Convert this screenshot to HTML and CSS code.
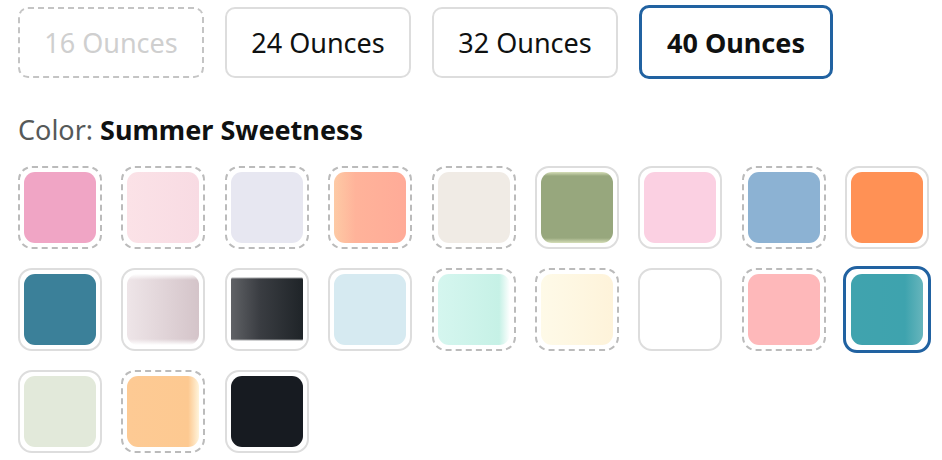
FILE: index.html
```html
<!DOCTYPE html>
<html>
<head>
<meta charset="utf-8">
<link rel="stylesheet" href="styles.css">
</head>
<body>
<div class="page">
  <div class="sizes">
    <div class="size-btn unavailable">16 Ounces</div>
    <div class="size-btn">24 Ounces</div>
    <div class="size-btn">32 Ounces</div>
    <div class="size-btn selected">40 Ounces</div>
  </div>
  <div class="color-label"><span class="label-key">Color: </span><span class="label-val">Summer Sweetness</span></div>
  <div class="swatches">
    <div class="swatch dashed"><div class="chip c1"></div></div>
    <div class="swatch dashed"><div class="chip c2"></div></div>
    <div class="swatch dashed"><div class="chip c3"></div></div>
    <div class="swatch dashed"><div class="chip c4"></div></div>
    <div class="swatch dashed"><div class="chip c5"></div></div>
    <div class="swatch"><div class="chip c6"></div></div>
    <div class="swatch"><div class="chip c7"></div></div>
    <div class="swatch dashed"><div class="chip c8"></div></div>
    <div class="swatch"><div class="chip c9"></div></div>

    <div class="swatch"><div class="chip c10"></div></div>
    <div class="swatch"><div class="chip c11"></div></div>
    <div class="swatch"><div class="chip c12"></div></div>
    <div class="swatch"><div class="chip c13"></div></div>
    <div class="swatch dashed"><div class="chip c14"></div></div>
    <div class="swatch dashed"><div class="chip c15"></div></div>
    <div class="swatch"><div class="chip c16"></div></div>
    <div class="swatch dashed"><div class="chip c17"></div></div>
    <div class="swatch selected"><div class="chip c18"></div></div>

    <div class="swatch"><div class="chip c19"></div></div>
    <div class="swatch dashed"><div class="chip c20"></div></div>
    <div class="swatch"><div class="chip c21"></div></div>
  </div>
</div>
</body>
</html>
```

FILE: styles.css
```css
html, body {
  margin: 0;
  padding: 0;
  background: #ffffff;
}

body {
  font-family: "Noto Sans", "Open Sans", Arial, sans-serif;
  color: #0f1111;
}

.page {
  padding: 5px 0 0 18px;
}

.sizes {
  display: flex;
  align-items: center;
  gap: 21px;
  height: 74px;
}

.size-btn {
  box-sizing: border-box;
  width: 186px;
  height: 71px;
  border: 2px solid #dddddd;
  border-radius: 10px;
  display: flex;
  align-items: center;
  justify-content: center;
  font-size: 27px;
  color: #0f1111;
}

.size-btn.unavailable {
  border: 2px dashed #c4c4c4;
  color: #cfcfcf;
}

.size-btn.selected {
  width: 194px;
  height: 74px;
  border: 3px solid #2162a1;
  font-weight: 700;
}

.color-label {
  margin-top: 33px;
  padding-left: 0;
  font-size: 27px;
  line-height: 36px;
}

.label-key {
  color: #565959;
}

.label-val {
  font-weight: 700;
  color: #0f1111;
}

.swatches {
  margin-top: 18px;
  display: grid;
  grid-template-columns: repeat(9, 84px);
  grid-auto-rows: 83px;
  column-gap: 19.4px;
  row-gap: 19px;
}

.swatch {
  box-sizing: border-box;
  width: 84px;
  height: 83px;
  border: 2px solid #dddddd;
  border-radius: 14px;
  padding: 4px;
}

.swatch.dashed {
  border: 2px dashed #bbbbbb;
}

.swatch.selected {
  width: 88px;
  height: 87px;
  margin: -2px;
  border: 3px solid #2162a1;
  padding: 5px;
}

.chip {
  width: 72px;
  height: 71px;
  border-radius: 11px;
}

.c1 { background: #f0a5c5; }
.c2 { background: linear-gradient(90deg, #fbe2e7, #f8dbe3); }
.c3 { background: #e7e7f1; }
.c4 { background: linear-gradient(90deg, #fdcaa5 0%, #ffb39a 30%, #ffab98 100%); }
.c5 { background: #f0ebe5; }
.c6 {
  background:
    linear-gradient(180deg, rgba(220,228,190,0.9) 0, rgba(220,228,190,0) 4px, rgba(220,228,190,0) calc(100% - 5px), rgba(220,228,190,0.9) 100%),
    #97a77d;
}
.c7 { background: #fbd0e2; }
.c8 { background: #8cb2d3; }
.c9 { background: #ff9155; }
.c10 { background: #3b8099; }
.c11 {
  background:
    linear-gradient(180deg, rgba(255,255,255,1) 0, rgba(255,255,255,0) 6px, rgba(255,255,255,0) calc(100% - 6px), rgba(255,255,255,1) 100%),
    linear-gradient(90deg, #eee5e8, #d4c4c9);
}
.c12 {
  border-radius: 6px;
  background:
    linear-gradient(180deg, #fff 0, #fff 3px, rgba(255,255,255,0) 5px, rgba(255,255,255,0) calc(100% - 6px), #fff calc(100% - 4px), #fff 100%),
    linear-gradient(90deg, #606266 0%, #3a3d42 40%, #1f2428 100%);
}
.c13 { background: #d6eaf1; }
.c14 { background: linear-gradient(90deg, #d5f6ef 0%, #c6f1e6 85%, #ffffff 100%); }
.c15 { background: linear-gradient(90deg, #fefae8, #fef3da); }
.c16 { background: #ffffff; }
.c17 { background: #feb8ba; }
.c18 { background: linear-gradient(90deg, #40a3ae 0%, #3ea3ae 75%, #67b5bc 100%); }
.c19 { background: #e2e9da; }
.c20 { background: linear-gradient(90deg, #fdca94 0%, #fdc991 85%, #fff4dc 100%); }
.c21 { background: #171b21; }
```
